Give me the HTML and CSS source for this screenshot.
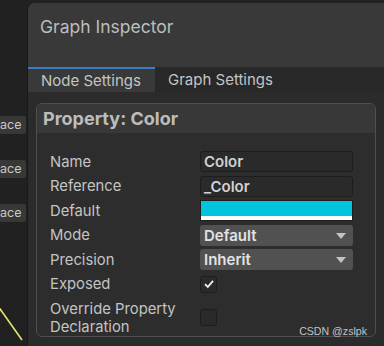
FILE: index.html
```html
<!DOCTYPE html>
<html lang="en">

<head>
    <meta charset="UTF-8">
    <meta name="viewport" content="width=device-width, initial-scale=1.0">
    <title>Graph Inspector</title>
    <link rel="stylesheet" href="styles.css">
</head>

<body>

    <!-- graph canvas behind the inspector -->
    <div class="canvas">
        <div class="node-btn">ace</div>
        <div class="node-btn">ace</div>
        <div class="node-btn">ace</div>
        <svg class="edge" width="27" height="40" viewBox="0 0 27 40">
            <line x1="-2" y1="0" x2="22" y2="34" stroke="#e6e67a" stroke-width="1.6" />
        </svg>
    </div>

    <div class="inspector">
        <div class="inspector-header">
            <h1>Graph Inspector</h1>
        </div>

        <div class="tabs">
            <div class="tab active">Node Settings</div>
            <div class="tab">Graph Settings</div>
        </div>

        <div class="content">
            <div class="property">
                <div class="property-title">Property: Color</div>

                <div class="fields">
                    <div class="row">
                        <span class="label">Name</span>
                        <div class="text-field">Color</div>
                    </div>
                    <div class="row">
                        <span class="label">Reference</span>
                        <div class="text-field">_Color</div>
                    </div>
                    <div class="row">
                        <span class="label">Default</span>
                        <div class="color-field">
                            <div class="color-swatch"></div>
                            <div class="alpha-bar"></div>
                        </div>
                    </div>
                    <div class="row">
                        <span class="label">Mode</span>
                        <div class="dropdown">Default<span class="arrow"></span></div>
                    </div>
                    <div class="row">
                        <span class="label">Precision</span>
                        <div class="dropdown">Inherit<span class="arrow"></span></div>
                    </div>
                    <div class="row">
                        <span class="label">Exposed</span>
                        <div class="checkbox">
                            <svg width="14" height="14" viewBox="0 0 14 14">
                                <path d="M3 7.2 L5.8 10 L11 3.8" fill="none" stroke="#f2f2f2" stroke-width="1.8" />
                            </svg>
                        </div>
                    </div>
                    <div class="row tall">
                        <span class="label">Override Property<br>Declaration</span>
                        <div class="checkbox"></div>
                    </div>
                </div>
            </div>
        </div>

        <div class="watermark">CSDN @zslpk</div>
    </div>

</body>

</html>
```

FILE: styles.css
```css
body {
    margin: 0;
    width: 384px;
    height: 346px;
    overflow: hidden;
    display: flex;
    background-color: #212121;
    font-family: Inter, "Noto Sans", sans-serif;
    color: #c4c4c4;
}

.canvas {
    position: relative;
    width: 27px;
    flex-shrink: 0;
    padding-top: 116px;
}

.node-btn {
    width: 26px;
    height: 18px;
    margin-bottom: 26px;
    background-color: #383838;
    color: #c8c8c8;
    font-size: 12.5px;
    line-height: 18px;
    border-radius: 0 2px 2px 0;
}

.edge {
    position: absolute;
    left: 0;
    bottom: 0;
}

.inspector {
    position: relative;
    flex: 1;
    margin-top: 3px;
    display: flex;
    flex-direction: column;
    background-color: #2b2b2b;
    border-left: 1px solid #191919;
    border-top-left-radius: 7px;
    overflow: hidden;
}

.inspector-header {
    height: 64px;
    background-color: #393939;
    padding-left: 12px;
}

h1 {
    margin: 0;
    padding-top: 13px;
    font-size: 17.5px;
    font-weight: normal;
    color: #bdbdbd;
}

.tabs {
    display: flex;
    height: 25px;
    background-color: #282828;
}

.tab {
    padding: 0 13px;
    font-size: 15px;
    line-height: 25px;
    color: #c4c4c4;
}

.tab.active {
    width: 101px;
    background-color: #393939;
    border-top: 2px solid #3b7cc4;
    line-height: 23px;
}

.content {
    flex: 1;
    padding: 11px 8px 0 8px;
}

.property {
    height: 232px;
    border: 1px solid #4f4f4f;
    border-radius: 6px;
    background-color: #2d2d2d;
    overflow: hidden;
}

.property-title {
    height: 29px;
    padding-left: 6px;
    background-color: #383838;
    font-size: 18px;
    font-weight: bold;
    line-height: 29px;
    color: #bdbdbd;
}

.fields {
    padding: 18px 0 0 13px;
}

.row {
    display: grid;
    grid-template-columns: 150px 153px;
    align-items: center;
    height: 21px;
    margin-bottom: 3.6px;
    font-size: 14.8px;
}

.row.tall {
    height: 38px;
    margin-top: 0;
    line-height: 18px;
}

.label {
    color: #c4c4c4;
}

.text-field {
    height: 19px;
    padding-left: 3px;
    background-color: #2a2a2a;
    border: 1px solid #1d1d1d;
    border-radius: 3px;
    font-weight: 600;
    font-size: 15px;
    line-height: 19px;
    color: #d2d2d2;
}

.color-field {
    height: 19px;
    border: 1px solid #1d1d1d;
    display: flex;
    flex-direction: column;
}

.color-swatch {
    flex: 1;
    background-color: #00c5dc;
}

.alpha-bar {
    height: 4px;
    background-color: #ffffff;
}

.dropdown {
    position: relative;
    height: 21px;
    padding-left: 4px;
    background-color: #515151;
    border-radius: 3px;
    font-weight: 600;
    font-size: 15px;
    line-height: 21px;
    color: #e2e2e2;
}

.arrow {
    position: absolute;
    right: 7px;
    top: 8px;
    border-left: 5px solid transparent;
    border-right: 5px solid transparent;
    border-top: 6px solid #c4c4c4;
}

.checkbox {
    width: 15px;
    height: 15px;
    background-color: #2a2a2a;
    border: 1px solid #1d1d1d;
    border-radius: 3px;
    display: flex;
    align-items: center;
    justify-content: center;
}

.watermark {
    position: absolute;
    right: 17px;
    bottom: 9px;
    font-family: "Liberation Sans", Arial, sans-serif;
    font-size: 10.6px;
    color: #c4c4c4;
}
```
